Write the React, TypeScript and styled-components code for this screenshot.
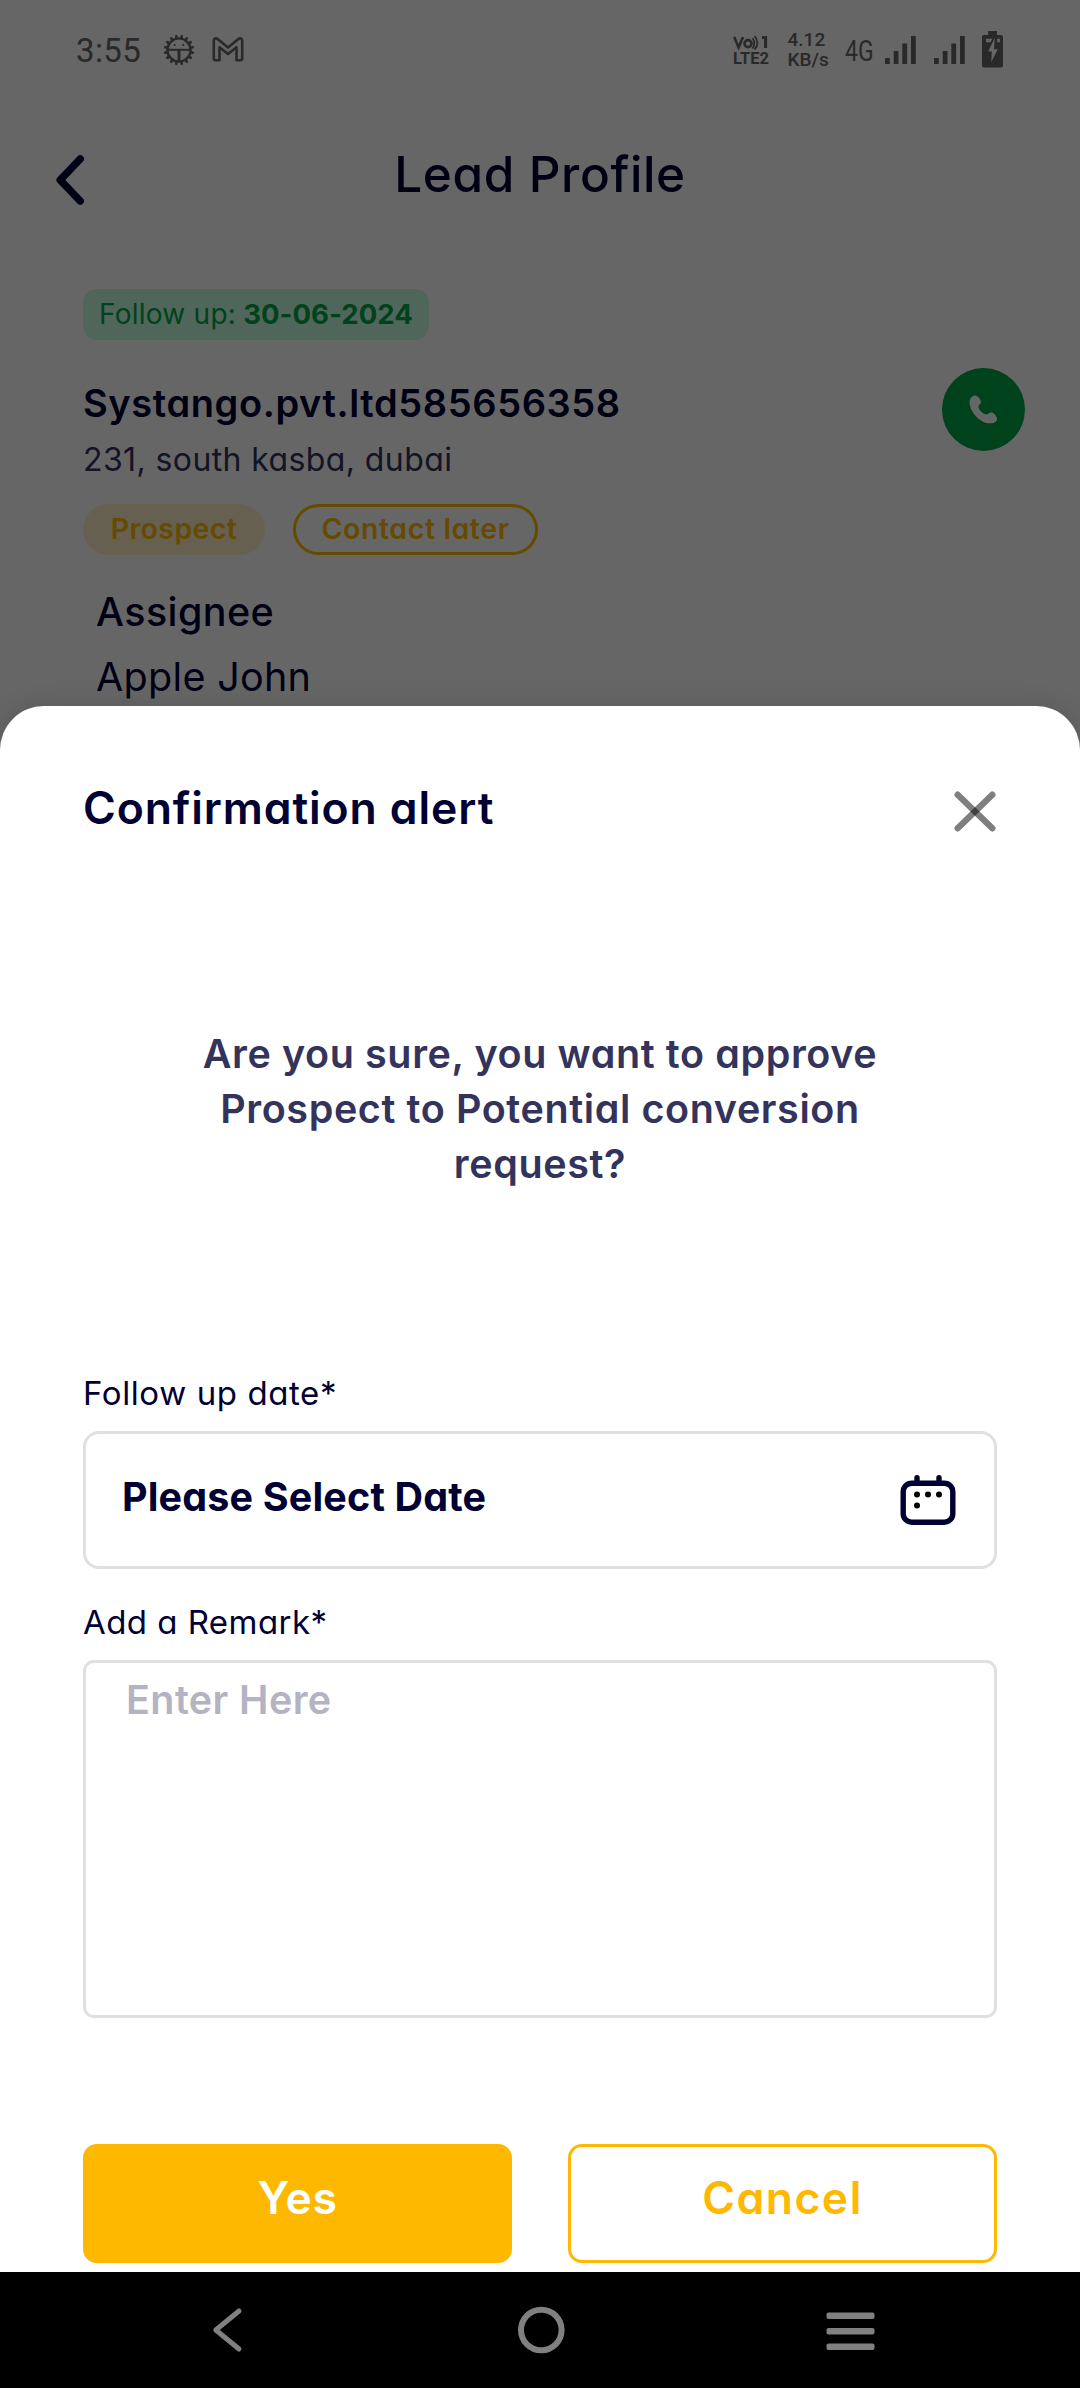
import React from "react";
import styled, { createGlobalStyle } from "styled-components";

const navy = "#000033";
const slate = "#33335c";
const amber = "#ffb800";
const green = "#00a546";
const line = "#e0e0e0";
const statusInk = "#666666";

const GlobalStyle = createGlobalStyle`
  *, *::before, *::after { box-sizing: border-box; }
  body { margin: 0; background: #ffffff; }
  body, button, textarea {
    font-family: Inter, "Open Sans", "Liberation Sans", sans-serif;
    font-feature-settings: "cv11" 1;
  }
`;

const Screen = styled.div`
  position: relative;
  width: 1080px;
  height: 2388px;
  overflow: hidden;
  background: #ffffff;
  color: ${navy};
`;

const Scrim = styled.div`
  position: absolute;
  inset: 0;
  display: flex;
  flex-direction: column;
  justify-content: flex-end;
  background: rgba(0, 0, 0, 0.6);
`;

const Text = styled.div<{
  $size: number;
  $weight?: number;
  $track?: number;
  $leading?: number;
  $color?: string;
}>`
  font-size: ${(p) => p.$size}px;
  font-weight: ${(p) => p.$weight ?? 400};
  letter-spacing: ${(p) => p.$track ?? 0}px;
  line-height: ${(p) => p.$leading ?? 50}px;
  color: ${(p) => p.$color ?? navy};
  white-space: nowrap;
`;

/* ---------- status bar ---------- */

const StatusBar = styled.div`
  display: flex;
  align-items: center;
  justify-content: space-between;
  height: 99px;
  padding: 0 77px 0 76px;
  color: ${statusInk};
  font-family: Roboto, sans-serif;
`;

const StatusGroup = styled.div<{ $gap: number }>`
  display: flex;
  align-items: center;
  gap: ${(p) => p.$gap}px;

  svg {
    display: block;
    overflow: visible;
  }
`;

const Clock = styled.span`
  width: 70px;
  padding-top: 2px;
  font-size: 33px;
  line-height: 40px;
  letter-spacing: 0.4px;
`;

const Speed = styled.div`
  width: 40px;
  font-size: 19px;
  font-weight: 500;
  line-height: 20px;
  white-space: nowrap;
`;

const teeth = Array.from({ length: 16 }, (_, i) => i * 22.5 + 11.25);

const BugIcon = () => (
  <svg width="32" height="32" viewBox="0 0 32 32" fill="none" stroke={statusInk}>
    {teeth.map((angle) => (
      <path key={angle} d="M16 4V1.900" strokeWidth="2.600" strokeLinecap="round" transform={`rotate(${angle} 16 16)`} />
    ))}
    <circle cx="16" cy="16" r="11.600" strokeWidth="2.400" />
    <path d="M5 15.800h22" strokeWidth="2" />
    <path d="M16 16v11.500" strokeWidth="3" />
    <circle cx="11.700" cy="11" r="1.100" fill={statusInk} stroke="none" />
    <circle cx="20.300" cy="11" r="1.100" fill={statusInk} stroke="none" />
  </svg>
);

const MailIcon = () => (
  <svg width="32" height="25" viewBox="0 0 32 25" fill="none" stroke={statusInk} strokeWidth="2.600" strokeLinejoin="round">
    <path d="M1.800 3.600v18.200q0 1.400 1.400 1.400h4.300v-13L16 17l8.500-6.800v13h4.300q1.400 0 1.400-1.400V3.600c0-2.200-2.300-2.800-3.800-1.600L16 10.500 5.600 2C4.100.8 1.800 1.400 1.800 3.600Z" />
  </svg>
);

const VolteIcon = () => (
  <svg width="37" height="34" viewBox="0 -2 37 34" fill="none" stroke={statusInk} strokeWidth="2.600">
    <path d="M1.300 2l4.300 10.400L10 2" />
    <circle cx="15" cy="8.600" r="3.500" />
    <path d="M19.600 3.300q3.400 5 0 10.200" strokeWidth="1.800" />
    <path d="M21.600 1q5.600 7 0 13.500" strokeWidth="1.800" />
    <path d="M29 2.500h3.600V13" strokeWidth="3" />
    <text x="0" y="29" textLength="36" lengthAdjust="spacingAndGlyphs" fontFamily="Roboto, sans-serif" fontWeight="700" fontSize="17" fill={statusInk} stroke="none">
      LTE2
    </text>
  </svg>
);

const NetworkIcon = () => (
  <svg width="29" height="40" viewBox="0 0 29 40">
    <text x="0" y="30.500" textLength="28.500" lengthAdjust="spacingAndGlyphs" fontFamily="Roboto, sans-serif" fontSize="29" fill={statusInk}>
      4G
    </text>
  </svg>
);

const SignalIcon = () => (
  <svg width="31" height="28" viewBox="0 0 31 28" fill={statusInk}>
    <path d="M0 22h4.800v6H0zM8.700 15h4.800v13H8.700zM17.300 7.500h4.800V28h-4.800zM26 0h4.800v28H26z" />
  </svg>
);

const BatteryIcon = () => (
  <svg width="21" height="37" viewBox="0 0 21 37">
    <path d="M6.200 0h8.800v4H19q2 0 2 2v28.500q0 2-2 2H2q-2 0-2-2V6q0-2 2-2h4.200z" fill={statusInk} />
    <path d="M4 7.800h6.400l-2 3.400H4zM15.200 7.800h2.700v3.400h-2.700z" fill="#ffffff" />
    <path d="M12.800 6.800 6.200 20.500h3.600L9.300 31l6.500-12.700H12z" fill="#ffffff" />
  </svg>
);

/* ---------- lead profile ---------- */

const Header = styled.header`
  display: grid;
  grid-template-columns: 40px 1fr 40px;
  align-items: center;
  height: 149px;
  padding: 0 50px;
  text-align: center;

  svg {
    display: block;
    margin: 12px 0 0 5px;
  }
`;

const Profile = styled.main`
  display: flex;
  flex-direction: column;
  align-items: flex-start;
  padding: 41px 55px 0 83px;
`;

const FollowUpChip = styled.div`
  display: flex;
  align-items: center;
  gap: 7px;
  width: 346px;
  height: 51px;
  padding: 0 0 2px 16px;
  border-radius: 14px;
  background: #c8ffe1;
`;

const LeadRow = styled.div`
  display: flex;
  align-items: flex-start;
  justify-content: space-between;
  width: 100%;
  height: 112px;
  margin-top: 28px;
`;

const LeadInfo = styled.div`
  display: flex;
  flex-direction: column;
  gap: 12px;
  padding-top: 10px;
`;

const CallButton = styled.button`
  display: flex;
  align-items: center;
  justify-content: center;
  width: 83px;
  height: 83px;
  padding: 0;
  border: 0;
  border-radius: 50%;
  background: ${green};
`;

const Pills = styled.div`
  display: flex;
  gap: 28px;
  margin-top: 24px;
`;

const Pill = styled.div<{ $width: number; $outlined?: boolean }>`
  display: flex;
  align-items: center;
  justify-content: center;
  width: ${(p) => p.$width}px;
  height: 51px;
  padding-bottom: 2px;
  border: ${(p) => (p.$outlined ? `3px solid ${amber}` : "0")};
  border-radius: 26px;
  background: ${(p) => (p.$outlined ? "transparent" : "#fff0c8")};
`;

const Assignee = styled.div`
  display: flex;
  flex-direction: column;
  gap: 15px;
  margin-top: 32px;
  padding-left: 13px;
`;

/* ---------- confirmation sheet ---------- */

const Sheet = styled.section`
  display: flex;
  flex-direction: column;
  height: 1566px;
  padding: 0 83px;
  border-radius: 44px 44px 0 0;
  background: #ffffff;
  box-shadow: 0 -2px 24px rgba(0, 0, 0, 0.12);
`;

const SheetHeader = styled.div`
  display: flex;
  align-items: center;
  justify-content: space-between;
  height: 203px;
  margin-bottom: 2px;

  svg {
    display: block;
    margin-top: 7px;
  }
`;

const Question = styled.p`
  width: 720px;
  margin: 116px auto 0;
  font-size: 39.5px;
  font-weight: 600;
  line-height: 55px;
  letter-spacing: 0.6px;
  text-align: center;
  color: ${slate};
`;

const Field = styled.div<{ $top: number }>`
  display: flex;
  flex-direction: column;
  gap: 18px;
  margin-top: ${(p) => p.$top}px;
`;

const DateBox = styled.div`
  display: flex;
  align-items: center;
  justify-content: space-between;
  height: 138px;
  padding: 0 38px 0 36px;
  border: 3px solid ${line};
  border-radius: 16px;
`;

const DateValue = styled(Text)`
  padding-bottom: 6px;
`;

const Remark = styled.textarea`
  display: block;
  width: 100%;
  height: 358px;
  padding: 12px 40px;
  border: 3px solid ${line};
  border-radius: 11px;
  outline: 0;
  resize: none;
  background: transparent;
  font-size: 39.5px;
  font-weight: 600;
  line-height: 50px;
  letter-spacing: 0.4px;
  color: ${navy};

  &::placeholder {
    color: #b3b3c2;
    opacity: 1;
  }
`;

const Actions = styled.div`
  display: grid;
  grid-template-columns: 1fr 1fr;
  gap: 56px;
  margin-top: 126px;
`;

const Action = styled.button<{ $filled?: boolean; $track: number }>`
  height: 119px;
  padding: 0 0 12px;
  border: 3px solid ${amber};
  border-radius: 14px;
  background: ${(p) => (p.$filled ? amber : "#ffffff")};
  color: ${(p) => (p.$filled ? "#ffffff" : amber)};
  font-size: 44.5px;
  font-weight: 600;
  letter-spacing: ${(p) => p.$track}px;
`;

const NavBar = styled.nav`
  display: flex;
  align-items: center;
  justify-content: space-between;
  height: 116px;
  padding: 0 200px 0 197px;
  background: #000000;

  svg {
    display: block;
  }
`;

const CalendarIcon = () => (
  <svg width="56" height="50" viewBox="0 0 56 50" fill="none">
    <rect x="3.200" y="8.200" width="49.600" height="39" rx="8.500" stroke={navy} strokeWidth="5.400" />
    <path d="M17 8V2.800M39 8V2.800" stroke={navy} strokeWidth="5.400" strokeLinecap="round" />
    <g fill="#000000">
      <circle cx="17" cy="19.500" r="3" />
      <circle cx="28" cy="19.500" r="3" />
      <circle cx="39" cy="19.500" r="3" />
      <circle cx="17" cy="30.500" r="3" />
    </g>
  </svg>
);

export default function App() {
  return (
    <>
      <GlobalStyle />
      <Screen>
        <StatusBar>
          <StatusGroup $gap={17}>
            <Clock>3:55</Clock>
            <BugIcon />
            <MailIcon />
          </StatusGroup>
          <StatusGroup $gap={17.5}>
            <VolteIcon />
            <Speed>
              4.12
              <br />
              KB/s
            </Speed>
            <StatusGroup $gap={11}>
              <NetworkIcon />
              <SignalIcon />
            </StatusGroup>
            <SignalIcon />
            <BatteryIcon />
          </StatusGroup>
        </StatusBar>

        <Header>
          <svg width="30" height="52" viewBox="0 0 30 52" fill="none" stroke={navy} strokeWidth="7.600" strokeLinecap="round" strokeLinejoin="round">
            <path d="M25.200 5 5.200 26 25.200 47" />
          </svg>
          <Text $size={49.5} $weight={500} $track={0.6}>
            Lead Profile
          </Text>
        </Header>

        <Profile>
          <FollowUpChip>
            <Text $size={28} $track={0.25} $color={green}>
              Follow up:
            </Text>
            <Text as="strong" $size={27.5} $weight={700} $track={0.05} $color={green}>
              30-06-2024
            </Text>
          </FollowUpChip>

          <LeadRow>
            <LeadInfo>
              <Text $size={38} $weight={600} $track={0.6}>
                Systango.pvt.ltd585656358
              </Text>
              <Text $size={32} $track={0.4} $leading={40} $color={slate}>
                231, south kasba, dubai
              </Text>
            </LeadInfo>
            <CallButton aria-label="Call">
              <svg width="29" height="29" viewBox="0 0 29 29" fill="#ffffff">
                <path d="M5.600.6C2.200 1.400.4 4.200.6 8.200 1 16.500 10.500 27.200 18.800 28.200c4.300.4 8.400-.6 9.200-3.800.4-2.300-2.400-5.800-4.800-6.800-2.600-.9-3.800 1.900-6 1.900-2.500 0-7.300-4.300-7.700-7.500-.1-2.200 3-2.900 2.300-5.900C11.200 3.600 8 .2 5.600.6Z" />
              </svg>
            </CallButton>
          </LeadRow>

          <Pills>
            <Pill $width={182}>
              <Text $size={28.5} $weight={600} $track={0.4} $color={amber}>
                Prospect
              </Text>
            </Pill>
            <Pill $width={245} $outlined>
              <Text $size={28.5} $weight={600} $track={0.6} $color={amber}>
                Contact later
              </Text>
            </Pill>
          </Pills>

          <Assignee>
            <Text $size={39.5} $weight={500} $track={0.4}>
              Assignee
            </Text>
            <Text $size={39.5} $track={0.3}>
              Apple John
            </Text>
          </Assignee>
        </Profile>

        <Scrim>
          <Sheet role="dialog" aria-label="Confirmation alert">
            <SheetHeader>
              <Text $size={44.5} $weight={600} $track={0.9}>
                Confirmation alert
              </Text>
              <svg width="43" height="41" viewBox="0 0 43 41" fill="none" stroke="#000000" strokeOpacity="0.5" strokeWidth="6.400" strokeLinecap="round">
                <path d="M3.700 3.700 38.300 37.300" />
                <path d="M38.300 3.700 3.700 37.300" />
              </svg>
            </SheetHeader>

            <Question>Are you sure, you want to approve Prospect to Potential conversion request?</Question>

            <Field $top={181}>
              <Text $size={33} $track={0.6} $leading={40}>
                Follow up date*
              </Text>
              <DateBox>
                <DateValue $size={39.5} $weight={700} $track={0.15}>
                  Please Select Date
                </DateValue>
                <CalendarIcon />
              </DateBox>
            </Field>

            <Field $top={33}>
              <Text $size={33} $track={0.45} $leading={40}>
                Add a Remark*
              </Text>
              <Remark placeholder="Enter Here" />
            </Field>

            <Actions>
              <Action $filled $track={0.6}>
                Yes
              </Action>
              <Action $track={1.5}>Cancel</Action>
            </Actions>
          </Sheet>

          <NavBar>
            <svg width="60" height="48" viewBox="0 0 60 48" fill="none" stroke="#808080" strokeWidth="5" strokeLinecap="round" strokeLinejoin="round">
              <path d="M42 5 18.800 24 42 43" />
            </svg>
            <svg width="64" height="48" viewBox="0 0 64 48" fill="none" stroke="#808080" strokeWidth="6">
              <circle cx="34.300" cy="24" r="20.300" />
            </svg>
            <svg width="60" height="48" viewBox="0 0 60 48" fill="#808080">
              <rect x="6.500" y="6.500" width="48" height="6.600" rx="2" />
              <rect x="6.500" y="22" width="48" height="6.600" rx="2" />
              <rect x="6.500" y="37.500" width="48" height="6.600" rx="2" />
            </svg>
          </NavBar>
        </Scrim>
      </Screen>
    </>
  );
}
